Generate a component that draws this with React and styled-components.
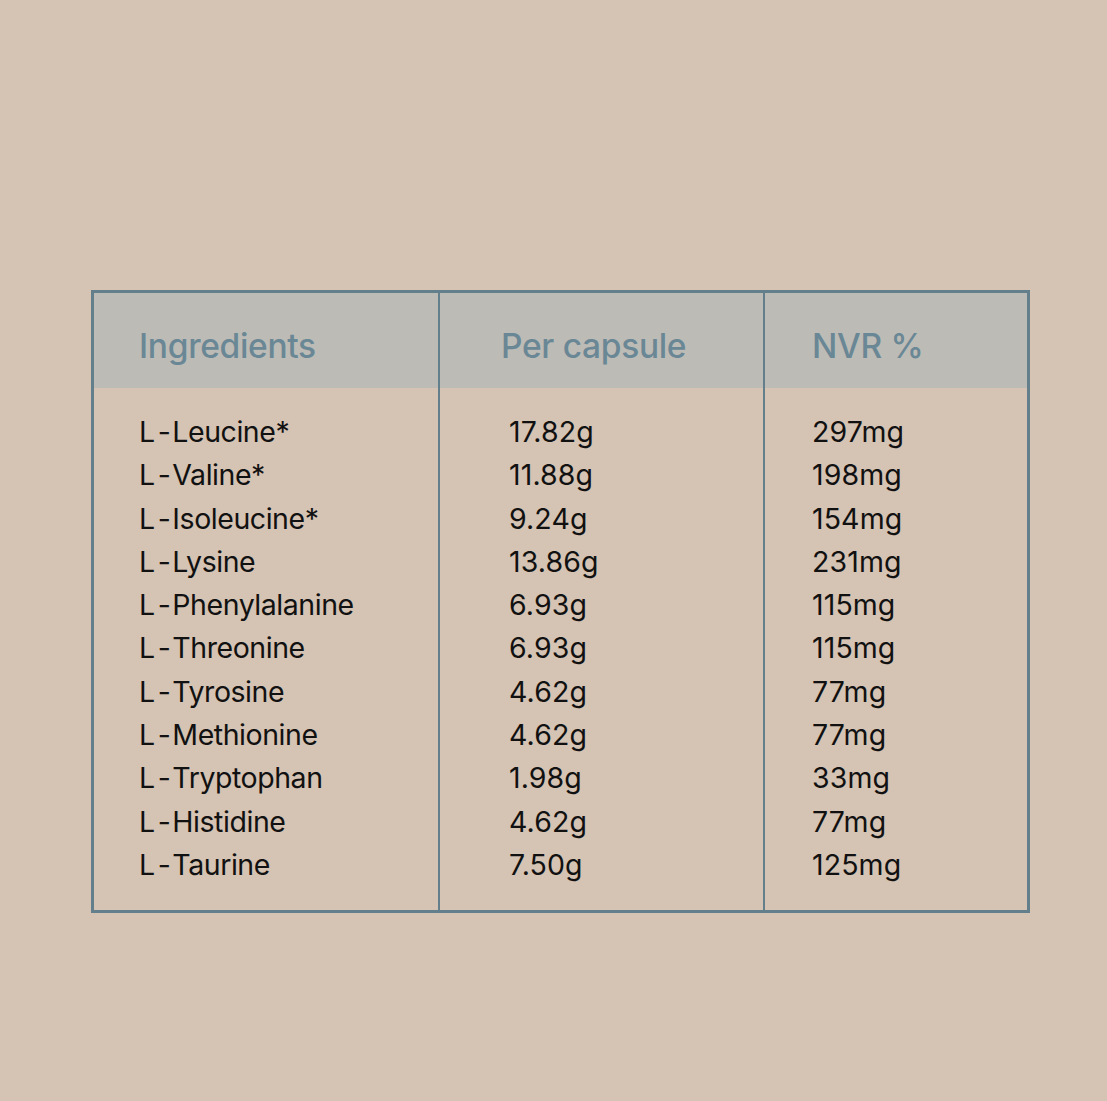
import React from 'react';
import styled, { createGlobalStyle } from 'styled-components';

const GlobalStyle = createGlobalStyle`
  html, body {
    margin: 0;
    padding: 0;
    background: #d5c3b3;
  }
  body {
    font-family: Inter, "Noto Sans", sans-serif;
  }
`;

const Page = styled.div`
  width: 1107px;
  height: 1101px;
  background: #d5c3b3;
  padding: 290px 0 0 91px;
  box-sizing: border-box;
`;

const Table = styled.div`
  width: 939px;
  border: 3px solid #647f8c;
  box-sizing: border-box;
  display: grid;
  grid-template-columns: 344px 2px 323px 2px 1fr;
`;

const Divider = styled.div`
  background: #647f8c;
  grid-row: 1 / span 2;
  grid-column: ${p => p.col};
`;

const HeadCell = styled.div`
  background: #bdbbb5;
  height: 95px;
  box-sizing: border-box;
  display: flex;
  align-items: center;
  padding: 11px 0 0 ${p => p.pad}px;
  color: #6a8795;
  font-size: 33.5px;
  font-weight: 500;
  letter-spacing: -0.3px;
  grid-row: 1;
  grid-column: ${p => p.col};
`;

const BodyCell = styled.div`
  padding: 22px 0 24px ${p => p.pad}px;
  grid-row: 2;
  grid-column: ${p => p.col};
`;

const Line = styled.div`
  height: 43.3px;
  line-height: 43.3px;
  font-size: 28.5px;
  color: #111;
  letter-spacing: ${p => (p.tight ? '-0.45px' : '0.1px')};
`;

const Hyphen = styled.span`
  margin: 0 2px 0 3px;
`;

const rows = [
  ['Leucine*', '17.82g', '297mg'],
  ['Valine*', '11.88g', '198mg'],
  ['Isoleucine*', '9.24g', '154mg'],
  ['Lysine', '13.86g', '231mg'],
  ['Phenylalanine', '6.93g', '115mg'],
  ['Threonine', '6.93g', '115mg'],
  ['Tyrosine', '4.62g', '77mg'],
  ['Methionine', '4.62g', '77mg'],
  ['Tryptophan', '1.98g', '33mg'],
  ['Histidine', '4.62g', '77mg'],
  ['Taurine', '7.50g', '125mg'],
];

const App = () => {
  return (
    <>
      <GlobalStyle />
      <Page>
        <Table>
          <HeadCell pad={45} col={1}>Ingredients</HeadCell>
          <Divider col={2} />
          <HeadCell pad={61} col={3}>Per capsule</HeadCell>
          <Divider col={4} />
          <HeadCell pad={47} col={5}>NVR %</HeadCell>

          <BodyCell pad={45} col={1}>
            {rows.map(r => <Line tight key={r[0]}>L<Hyphen>-</Hyphen>{r[0]}</Line>)}
          </BodyCell>
          <BodyCell pad={69} col={3}>
            {rows.map(r => <Line key={r[0]}>{r[1]}</Line>)}
          </BodyCell>
          <BodyCell pad={47} col={5}>
            {rows.map(r => <Line key={r[0]}>{r[2]}</Line>)}
          </BodyCell>
        </Table>
      </Page>
    </>
  );
};

export default App;
